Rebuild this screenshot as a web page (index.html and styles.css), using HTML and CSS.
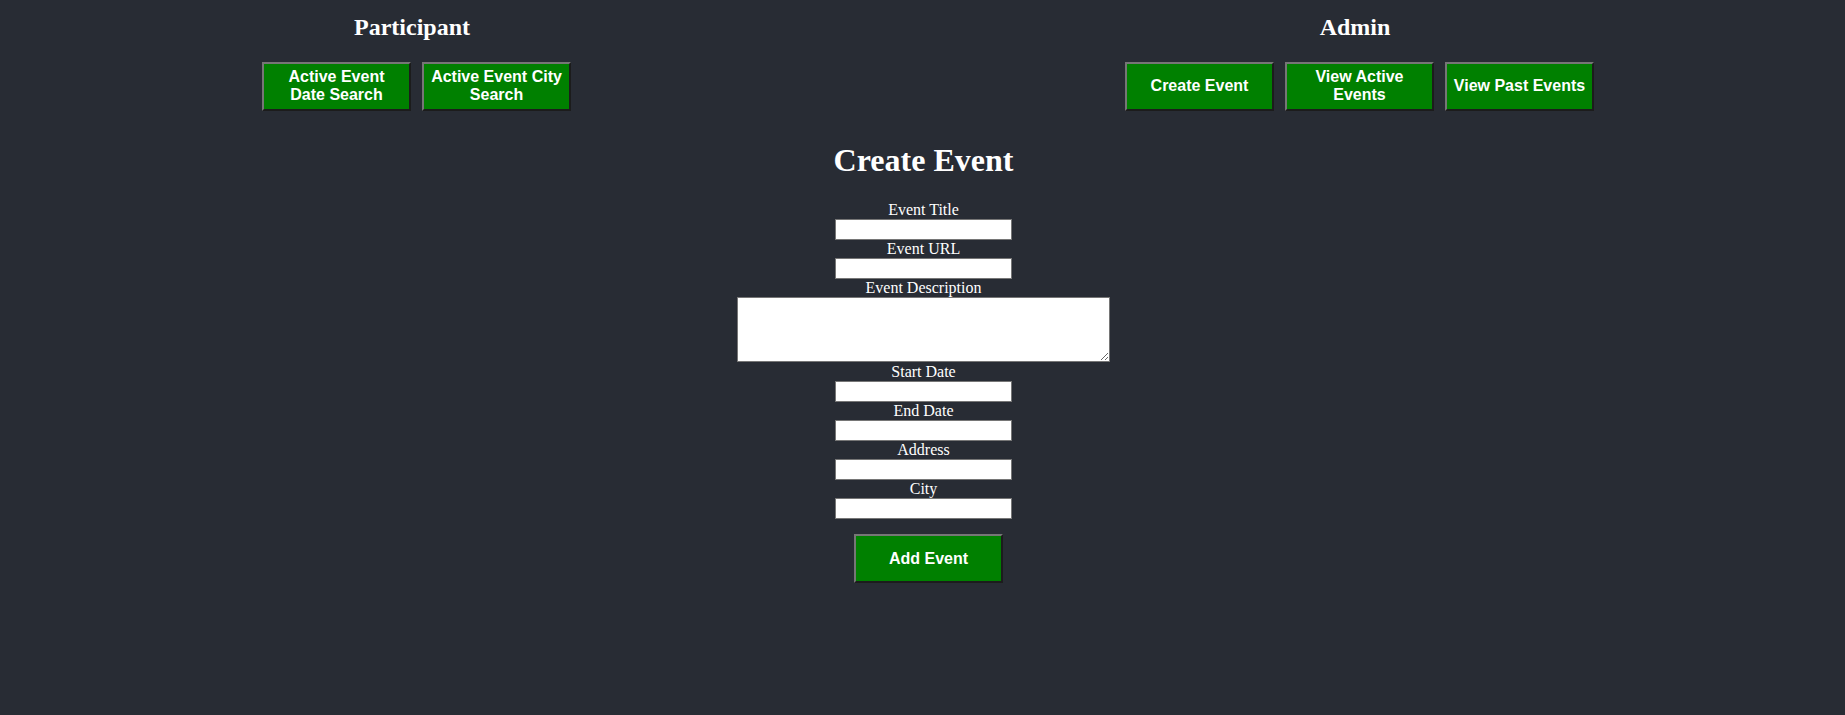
FILE: index.html
```html
<!DOCTYPE html>
<html lang="en">
<head>
<meta charset="utf-8">
<title>Create Event</title>
<link rel="stylesheet" href="styles.css">
</head>
<body>
<div class="nav">
  <div class="nav-col">
    <h2 class="nav-title">Participant</h2>
    <div class="btn-row">
      <button class="btn" type="button">Active Event<br>Date Search</button>
      <button class="btn" type="button">Active Event City<br>Search</button>
    </div>
  </div>
  <div class="nav-col">
    <h2 class="nav-title">Admin</h2>
    <div class="btn-row">
      <button class="btn" type="button">Create Event</button>
      <button class="btn" type="button">View Active<br>Events</button>
      <button class="btn" type="button">View Past Events</button>
    </div>
  </div>
</div>
<main class="create">
  <h1 class="create-title">Create Event</h1>
  <form class="event-form">
    <label class="field-label" for="title">Event Title</label>
    <input class="field-input" id="title" type="text">
    <label class="field-label" for="url">Event URL</label>
    <input class="field-input" id="url" type="text">
    <label class="field-label" for="desc">Event Description</label>
    <textarea class="field-area" id="desc"></textarea>
    <label class="field-label" for="start">Start Date</label>
    <input class="field-input" id="start" type="text">
    <label class="field-label" for="end">End Date</label>
    <input class="field-input" id="end" type="text">
    <label class="field-label" for="address">Address</label>
    <input class="field-input" id="address" type="text">
    <label class="field-label" for="city">City</label>
    <input class="field-input" id="city" type="text">
    <button class="btn btn-submit" type="button">Add Event</button>
  </form>
</main>
</body>
</html>
```

FILE: styles.css
```css
html {
  background: #282c34;
}
body {
  margin: 0;
  min-height: 715px;
  background: #282c34;
  color: #ffffff;
  font-family: "Liberation Serif", "Times New Roman", serif;
  font-size: 16px;
}
.nav {
  display: flex;
  justify-content: space-between;
  padding: 13px 251px 0 253px;
}
.nav-col {
  display: flex;
  flex-direction: column;
  align-items: center;
}
.nav-title {
  margin: 0;
  font-size: 24px;
  line-height: 28px;
  font-weight: bold;
  color: #ffffff;
}
.btn-row {
  display: flex;
  gap: 11px;
  padding-left: 9px;
  margin-top: 20.7px;
}
.btn {
  box-sizing: border-box;
  width: 149px;
  height: 49px;
  margin: 0;
  padding: 0 4px;
  background: #008000;
  color: #ffffff;
  font-family: "Liberation Sans", Arial, sans-serif;
  font-size: 16px;
  font-weight: bold;
  line-height: 18px;
  white-space: nowrap;
  border-style: solid;
  border-width: 2px;
  border-color: #767676 #1c1c1c #1c1c1c #767676;
  cursor: pointer;
}
.create {
  padding-left: 2px;
}
.create-title {
  margin: 31.7px 0 21.2px;
  text-align: center;
  font-size: 32px;
  line-height: 37px;
  font-weight: bold;
  color: #ffffff;
}
.event-form {
  display: flex;
  flex-direction: column;
  align-items: center;
}
.field-label {
  display: block;
  line-height: 16px;
  padding-top: 1px;
  margin-bottom: 1px;
  color: #ffffff;
}
.field-input {
  box-sizing: border-box;
  display: block;
  width: 176.4px;
  height: 21px;
  margin: 0;
  padding: 1px 2px;
  background: #ffffff;
  border: 1px solid #767676;
  border-radius: 0;
}
.field-area {
  box-sizing: border-box;
  display: block;
  width: 372.4px;
  height: 65.3px;
  margin: 0 0 1px;
  padding: 2px;
  background: #ffffff;
  border: 1px solid #767676;
  border-radius: 0;
}
.btn-submit {
  margin-top: 15.4px;
  margin-left: 10px;
}
```
